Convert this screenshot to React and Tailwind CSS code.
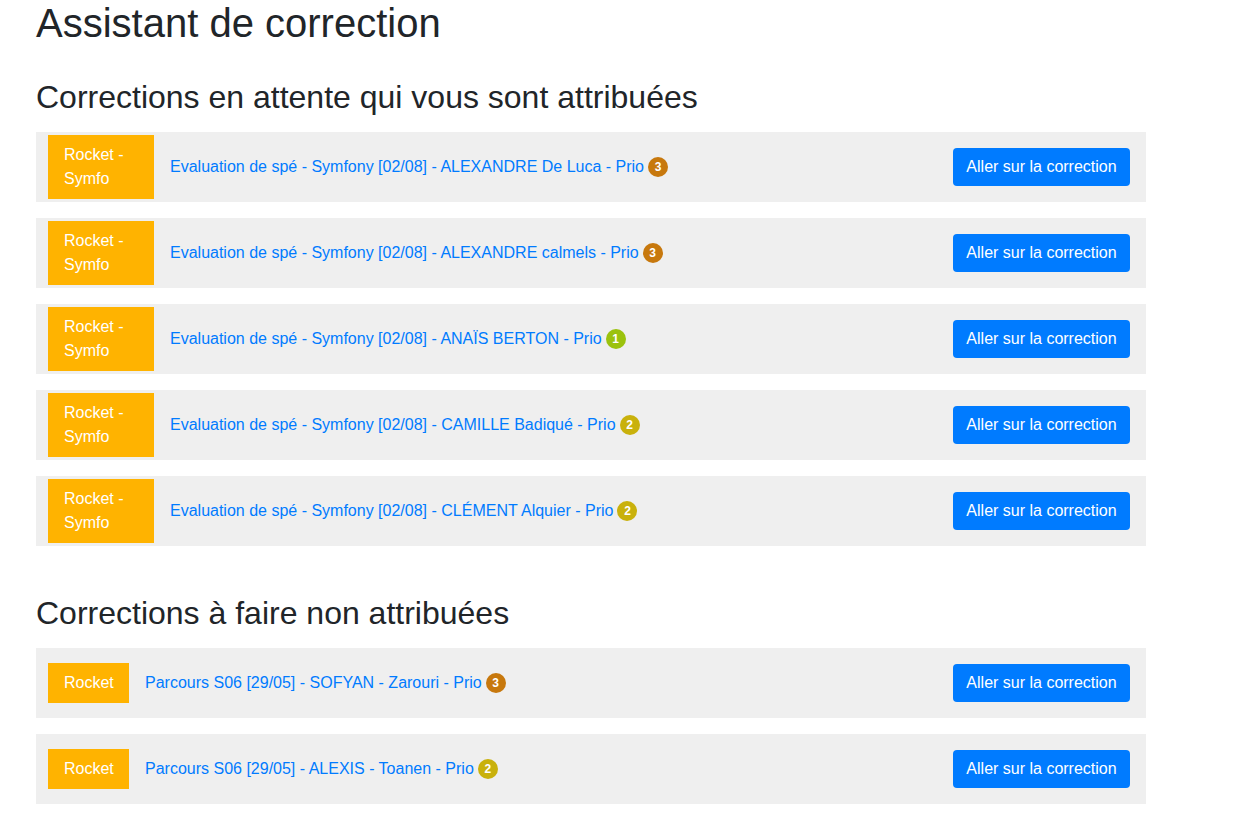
const assigned = [
  { tag: "Rocket - Symfo", label: "Evaluation de spé - Symfony [02/08] - ALEXANDRE De Luca - Prio", prio: 3 },
  { tag: "Rocket - Symfo", label: "Evaluation de spé - Symfony [02/08] - ALEXANDRE calmels - Prio", prio: 3 },
  { tag: "Rocket - Symfo", label: "Evaluation de spé - Symfony [02/08] - ANAÏS BERTON - Prio", prio: 1 },
  { tag: "Rocket - Symfo", label: "Evaluation de spé - Symfony [02/08] - CAMILLE Badiqué - Prio", prio: 2 },
  { tag: "Rocket - Symfo", label: "Evaluation de spé - Symfony [02/08] - CLÉMENT Alquier - Prio", prio: 2 },
];

const unassigned = [
  { tag: "Rocket", label: "Parcours S06 [29/05] - SOFYAN - Zarouri - Prio", prio: 3 },
  { tag: "Rocket", label: "Parcours S06 [29/05] - ALEXIS - Toanen - Prio", prio: 2 },
];

// prio colour: 1 green, 2 yellow, 3 orange-brown
const prioClass = {
  1: "bg-[#9bc20d]",
  2: "bg-[#c9b10c]",
  3: "bg-[#c7780d]",
};

function CorrectionRow({ item, narrowTag }) {
  return (
    <div className="flex h-[70px] items-center bg-[#efefef] pl-3 pr-4 mb-4">
      <div
        className={
          "bg-[#ffb300] text-white px-4 py-2 leading-6 " +
          (narrowTag ? "w-[81px]" : "w-[106px]")
        }
      >
        {item.tag}
      </div>
      <a href="#" className="ml-4 flex items-center text-[#007bff] leading-6">
        {item.label}
        <span
          className={
            "ml-1 flex h-[20px] w-[20px] items-center justify-center rounded-full text-[12px] font-bold text-white " +
            prioClass[item.prio]
          }
        >
          {item.prio}
        </span>
      </a>
      <button className="ml-auto h-[38px] w-[177px] rounded bg-[#007bff] text-white leading-6">
        Aller sur la correction
      </button>
    </div>
  );
}

export default function App() {
  return (
    <div
      className="min-h-[816px] bg-white text-[16px] text-[#212529]"
      style={{ fontFamily: '"Liberation Sans", Arial, sans-serif' }}
    >
      <div className="ml-[36px] w-[1110px]">
        <h1 className="text-[40px] leading-[48px] -mt-[1px]">Assistant de correction</h1>

        <h2 className="mt-[31px] mb-4 text-[32px] leading-[38px]">
          Corrections en attente qui vous sont attribuées
        </h2>
        {assigned.map((item, i) => (
          <CorrectionRow key={i} item={item} />
        ))}

        <h2 className="mt-[48px] mb-4 text-[32px] leading-[38px]">Corrections à faire non attribuées</h2>
        {unassigned.map((item, i) => (
          <CorrectionRow key={i} item={item} narrowTag />
        ))}
      </div>
    </div>
  );
}
